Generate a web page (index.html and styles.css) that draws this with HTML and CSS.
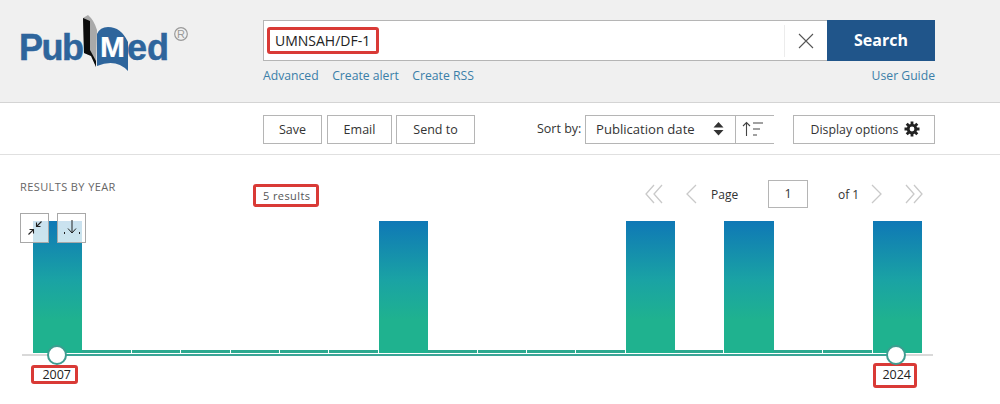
FILE: index.html
```html
<!DOCTYPE html>
<html lang="en">
<head>
<meta charset="utf-8">
<title>PubMed</title>
<link rel="stylesheet" href="styles.css">
</head>
<body>
<header class="masthead">
  <a class="logo" aria-label="PubMed">
    <svg width="190" height="75" viewBox="0 0 190 75">
      <path d="M83 18 L84 53 L92 56 L96 67 L97 30 Q94 20 88 15 Z" fill="#a9a9a9"/>
      <path d="M83 18 L90 21 L90 50 L96 61 L96 67 L91 56 L84 53 Z" fill="#0c0c0c"/>
      <path d="M97 66 L97 34 Q100 27 108 27 Q121 27 128 42 L128 71 Q116 58 97 66 Z" fill="#2e659c"/>
      <text class="logo-word logo-pub" x="19" y="60">Pub</text>
      <text class="logo-word logo-m" x="100" y="57">M</text>
      <text class="logo-word" x="127" y="60">ed</text>
      <circle cx="181" cy="34" r="6.3" fill="none" stroke="#9a9a9a" stroke-width="1.2"/>
      <text class="logo-reg" x="181" y="38" text-anchor="middle">R</text>
    </svg>
  </a>
  <div class="search-area">
    <form class="search-form">
      <div class="search-box">
        <span class="term annotated">UMNSAH/DF-1</span>
        <span class="clear">
          <svg width="16" height="16" viewBox="0 0 16 16"><path d="M1 1 L15 15 M15 1 L1 15" stroke="#555" stroke-width="1.1" fill="none"/></svg>
        </span>
      </div>
      <button class="search-btn" type="button">Search</button>
    </form>
    <nav class="search-links">
      <a>Advanced</a><a>Create alert</a><a>Create RSS</a><a class="guide">User Guide</a>
    </nav>
  </div>
</header>

<section class="toolbar">
  <button class="tool save" type="button">Save</button>
  <button class="tool email" type="button">Email</button>
  <button class="tool send" type="button">Send to</button>
  <span class="sort-label">Sort by:</span>
  <div class="sort">
    <span class="sort-value">Publication date
      <svg width="11" height="14" viewBox="0 0 11 14"><path d="M5.5 0 L10.5 5.5 H0.5 Z M0.5 8 H10.5 L5.5 13.5 Z" fill="#333"/></svg>
    </span>
    <span class="sort-dir">
      <svg width="24" height="16" viewBox="0 0 24 16"><path d="M4.5 15 V1.5 M1 5 L4.5 1.5 L8 5 M11 2 H21 M11 8 H18 M11 14 H15" stroke="#444" stroke-width="1.1" fill="none"/></svg>
    </span>
  </div>
  <button class="tool display" type="button">Display options
    <svg width="16" height="16" viewBox="0 0 16 16"><circle cx="8" cy="8" r="3.8" fill="none" stroke="#222" stroke-width="2.8"/><path d="M8 0.5 V15.5 M0.5 8 H15.5 M2.7 2.7 L13.3 13.3 M13.3 2.7 L2.7 13.3" stroke="#222" stroke-width="2.8" stroke-dasharray="3 9"/></svg>
  </button>
</section>

<main class="results">
  <div class="results-head">
    <h3 class="year-title">RESULTS BY YEAR</h3>
    <span class="count annotated">5 results</span>
    <div class="pager">
      <svg class="p-first" width="18" height="20" viewBox="0 0 18 20"><path d="M9 1 L1 10 L9 19 M17 1 L9 10 L17 19" stroke="#c9c9c9" stroke-width="1.3" fill="none"/></svg>
      <svg class="p-prev" width="12" height="20" viewBox="0 0 12 20"><path d="M11 1 L2 10 L11 19" stroke="#c9c9c9" stroke-width="1.3" fill="none"/></svg>
      <span class="p-label">Page</span>
      <span class="p-input">1</span>
      <span class="p-of">of 1</span>
      <svg class="p-next" width="12" height="20" viewBox="0 0 12 20"><path d="M1 1 L10 10 L1 19" stroke="#c9c9c9" stroke-width="1.3" fill="none"/></svg>
      <svg class="p-last" width="18" height="20" viewBox="0 0 18 20"><path d="M1 1 L9 10 L1 19 M9 1 L17 10 L9 19" stroke="#c9c9c9" stroke-width="1.3" fill="none"/></svg>
    </div>
  </div>

  <div class="timeline">
    <button class="chart-btn collapse" type="button" aria-label="Collapse">
      <svg width="16" height="16" viewBox="0 0 16 16"><path d="M1.5 14.5 L6 10 M2.5 9.5 H6.5 V13.5 M14.5 1.5 L10 6 M13.5 6.5 H9.5 V2.5" stroke="#222" stroke-width="1.1" fill="none"/></svg>
    </button>
    <button class="chart-btn download" type="button" aria-label="Download">
      <svg width="18" height="18" viewBox="0 0 18 18"><path d="M9 1 V14 M5 9.5 L9 14 L13 9.5 M1.5 13 V15 M16.5 13 V15" stroke="#222" stroke-width="1" fill="none"/></svg>
    </button>
    <div class="bars">
      <i class="bar full"></i><i class="bar"></i><i class="bar"></i><i class="bar"></i><i class="bar"></i><i class="bar"></i><i class="bar"></i>
      <i class="bar full"></i><i class="bar"></i><i class="bar"></i><i class="bar"></i><i class="bar"></i>
      <i class="bar full"></i><i class="bar"></i>
      <i class="bar full"></i><i class="bar"></i><i class="bar"></i>
      <i class="bar full"></i>
    </div>
    <div class="track">
      <span class="track-fill"></span>
      <span class="handle start"></span>
      <span class="handle end"></span>
    </div>
    <div class="years">
      <span class="year y-start annotated">2007</span>
      <span class="year y-end annotated">2024</span>
    </div>
  </div>
</main>
</body>
</html>
```

FILE: styles.css
```css
* { box-sizing: border-box; }
html, body { margin: 0; padding: 0; }
body {
  width: 1000px;
  height: 404px;
  overflow: hidden;
  background: #fff;
  color: #333;
  font-family: "Open Sans", "Noto Sans", "Liberation Sans", sans-serif;
  font-size: 12.5px;
}

/* Masthead */
.masthead {
  display: flex;
  height: 103px;
  background: #f0f0f0;
  border-bottom: 1px solid #d4d4d4;
}
.logo { display: block; width: 263px; flex: none; height: 75px; }
.logo-word {
  font-family: "Liberation Sans", sans-serif;
  font-weight: 700;
  font-size: 36px;
  fill: #2e659c;
  stroke: #2e659c;
  stroke-width: .5px;
}
.logo-pub { letter-spacing: -1.5px; }
.logo-m { fill: #fff; stroke: #fff; stroke-width: .2px; font-size: 30px; }
.logo-reg {
  font-family: "Liberation Sans", sans-serif;
  font-size: 11px;
  fill: #9a9a9a;
}
.search-area { width: 672px; padding-top: 20px; }
.search-form { display: flex; height: 41px; }
.search-box {
  flex: 1;
  display: flex;
  align-items: center;
  justify-content: space-between;
  background: #fff;
  border: 1px solid #b5b5b5;
  border-right: 0;
  padding-left: 3px;
}
.term {
  font-size: 14px;
  color: #222;
  width: 112px;
  height: 27px;
  line-height: 21px;
  padding-left: 5px;
  white-space: nowrap;
}
.annotated {
  display: block;
  border: 3px solid #d93a36;
  border-radius: 3px;
  background: #fff;
}
.clear {
  display: flex;
  align-items: center;
  justify-content: center;
  width: 43px;
  height: 32px;
  border-left: 1px solid #ececec;
}
.search-btn {
  width: 108px;
  border: 0;
  background: #20558a;
  color: #fff;
  font-family: inherit;
  font-size: 16px;
  font-weight: 700;
  padding: 0 0 2px;
}
.search-links {
  display: flex;
  gap: 13.5px;
  margin-top: 6px;
  color: #3a7ea8;
  font-size: 12.2px;
  line-height: 18px;
}
.guide { margin-left: auto; }

/* Toolbar */
.toolbar {
  display: flex;
  align-items: center;
  height: 52px;
  padding: 0 65px 0 263px;
  border-bottom: 1px solid #e0e0e0;
}
.tool {
  height: 29px;
  margin-top: 1px;
  padding: 0;
  background: #fff;
  border: 1px solid #b5b5b5;
  color: #333;
  font-family: inherit;
  font-size: 12.5px;
}
.save { width: 59px; }
.email { width: 65px; margin-left: 5px; }
.send { width: 79px; margin-left: 4px; }
.sort-label { margin-left: 62px; width: 48px; }
.sort {
  display: flex;
  height: 29px;
  width: 189px;
  margin-top: 1px;
  border: 1px solid #b5b5b5;
  border-right: 0;
}
.sort-value {
  display: flex;
  align-items: center;
  justify-content: space-between;
  width: 150px;
  padding: 0 11px 0 10px;
  border-right: 1px solid #b5b5b5;
  font-size: 13.1px;
}
.sort-dir {
  display: flex;
  align-items: center;
  padding-left: 6px;
}
.display {
  display: flex;
  align-items: center;
  justify-content: center;
  gap: 6px;
  width: 142px;
  margin-left: 19px;
  padding-left: 3px;
  font-size: 12.3px;
}

/* Results */
.results-head {
  display: flex;
  height: 58px;
  padding-left: 20px;
}
.year-title {
  margin: 24px 0 0;
  width: 233px;
  font-size: 11px;
  font-weight: 400;
  letter-spacing: .4px;
  line-height: 16px;
  color: #666;
}
.count {
  width: 66px;
  height: 23px;
  margin-top: 29px;
  padding-left: 7px;
  font-size: 11px;
  line-height: 17px;
  color: #555;
  letter-spacing: .4px;
}
.pager {
  display: flex;
  align-items: center;
  height: 30px;
  margin: 24px 0 0 326px;
}
.p-prev { margin-left: 22px; }
.p-label { margin-left: 14px; width: 57px; font-size: 12px; }
.p-input {
  width: 40px;
  height: 28px;
  border: 1px solid #b5b5b5;
  text-align: center;
  line-height: 26px;
}
.p-of { margin-left: 30px; font-size: 12px; }
.p-next { margin-left: 12px; }
.p-last { margin-left: 22px; }

/* Timeline */
.timeline { position: relative; padding-top: 8px; }
.chart-btn {
  position: absolute;
  top: 0;
  display: flex;
  align-items: center;
  justify-content: center;
  width: 29px;
  height: 30px;
  padding: 0;
  background: rgba(255, 255, 255, .78);
  border: 1px solid #a8a8a8;
}
.collapse { left: 20px; }
.download { left: 57px; }
.bars {
  display: grid;
  grid-template-columns: repeat(18, 1fr);
  align-items: end;
  width: 889px;
  height: 132px;
  margin-left: 33px;
}
.bar {
  display: block;
  height: 3px;
  background: #2ba98f;
  border-right: 1px solid #fff;
}
.full {
  height: 132px;
  border-right: 0;
  background: linear-gradient(#0f78b6 0%, #1aa3a4 45%, #1fb28f 75%);
}
.track {
  position: relative;
  width: 911px;
  height: 2px;
  margin: 1px 0 0 22px;
  background: #d9d9d9;
}
.track-fill {
  position: absolute;
  left: 35px;
  right: 37px;
  top: 0;
  height: 2px;
  background: #3aa596;
}
.handle {
  position: absolute;
  top: -9px;
  width: 20px;
  height: 20px;
  border: 2px solid #3f9c90;
  border-radius: 50%;
  background: #fff;
}
.start { left: 25px; }
.end { left: 864px; }
.years {
  display: flex;
  justify-content: space-between;
  align-items: flex-start;
  margin: 7px 83px 0 31px;
}
.year {
  font-size: 12.5px;
  color: #222;
  text-align: right;
}
.y-start { width: 47px; height: 19px; margin-top: 2px; padding-right: 4px; line-height: 13px; }
.y-end { width: 44px; height: 25px; padding-right: 3px; line-height: 18px; }
```
